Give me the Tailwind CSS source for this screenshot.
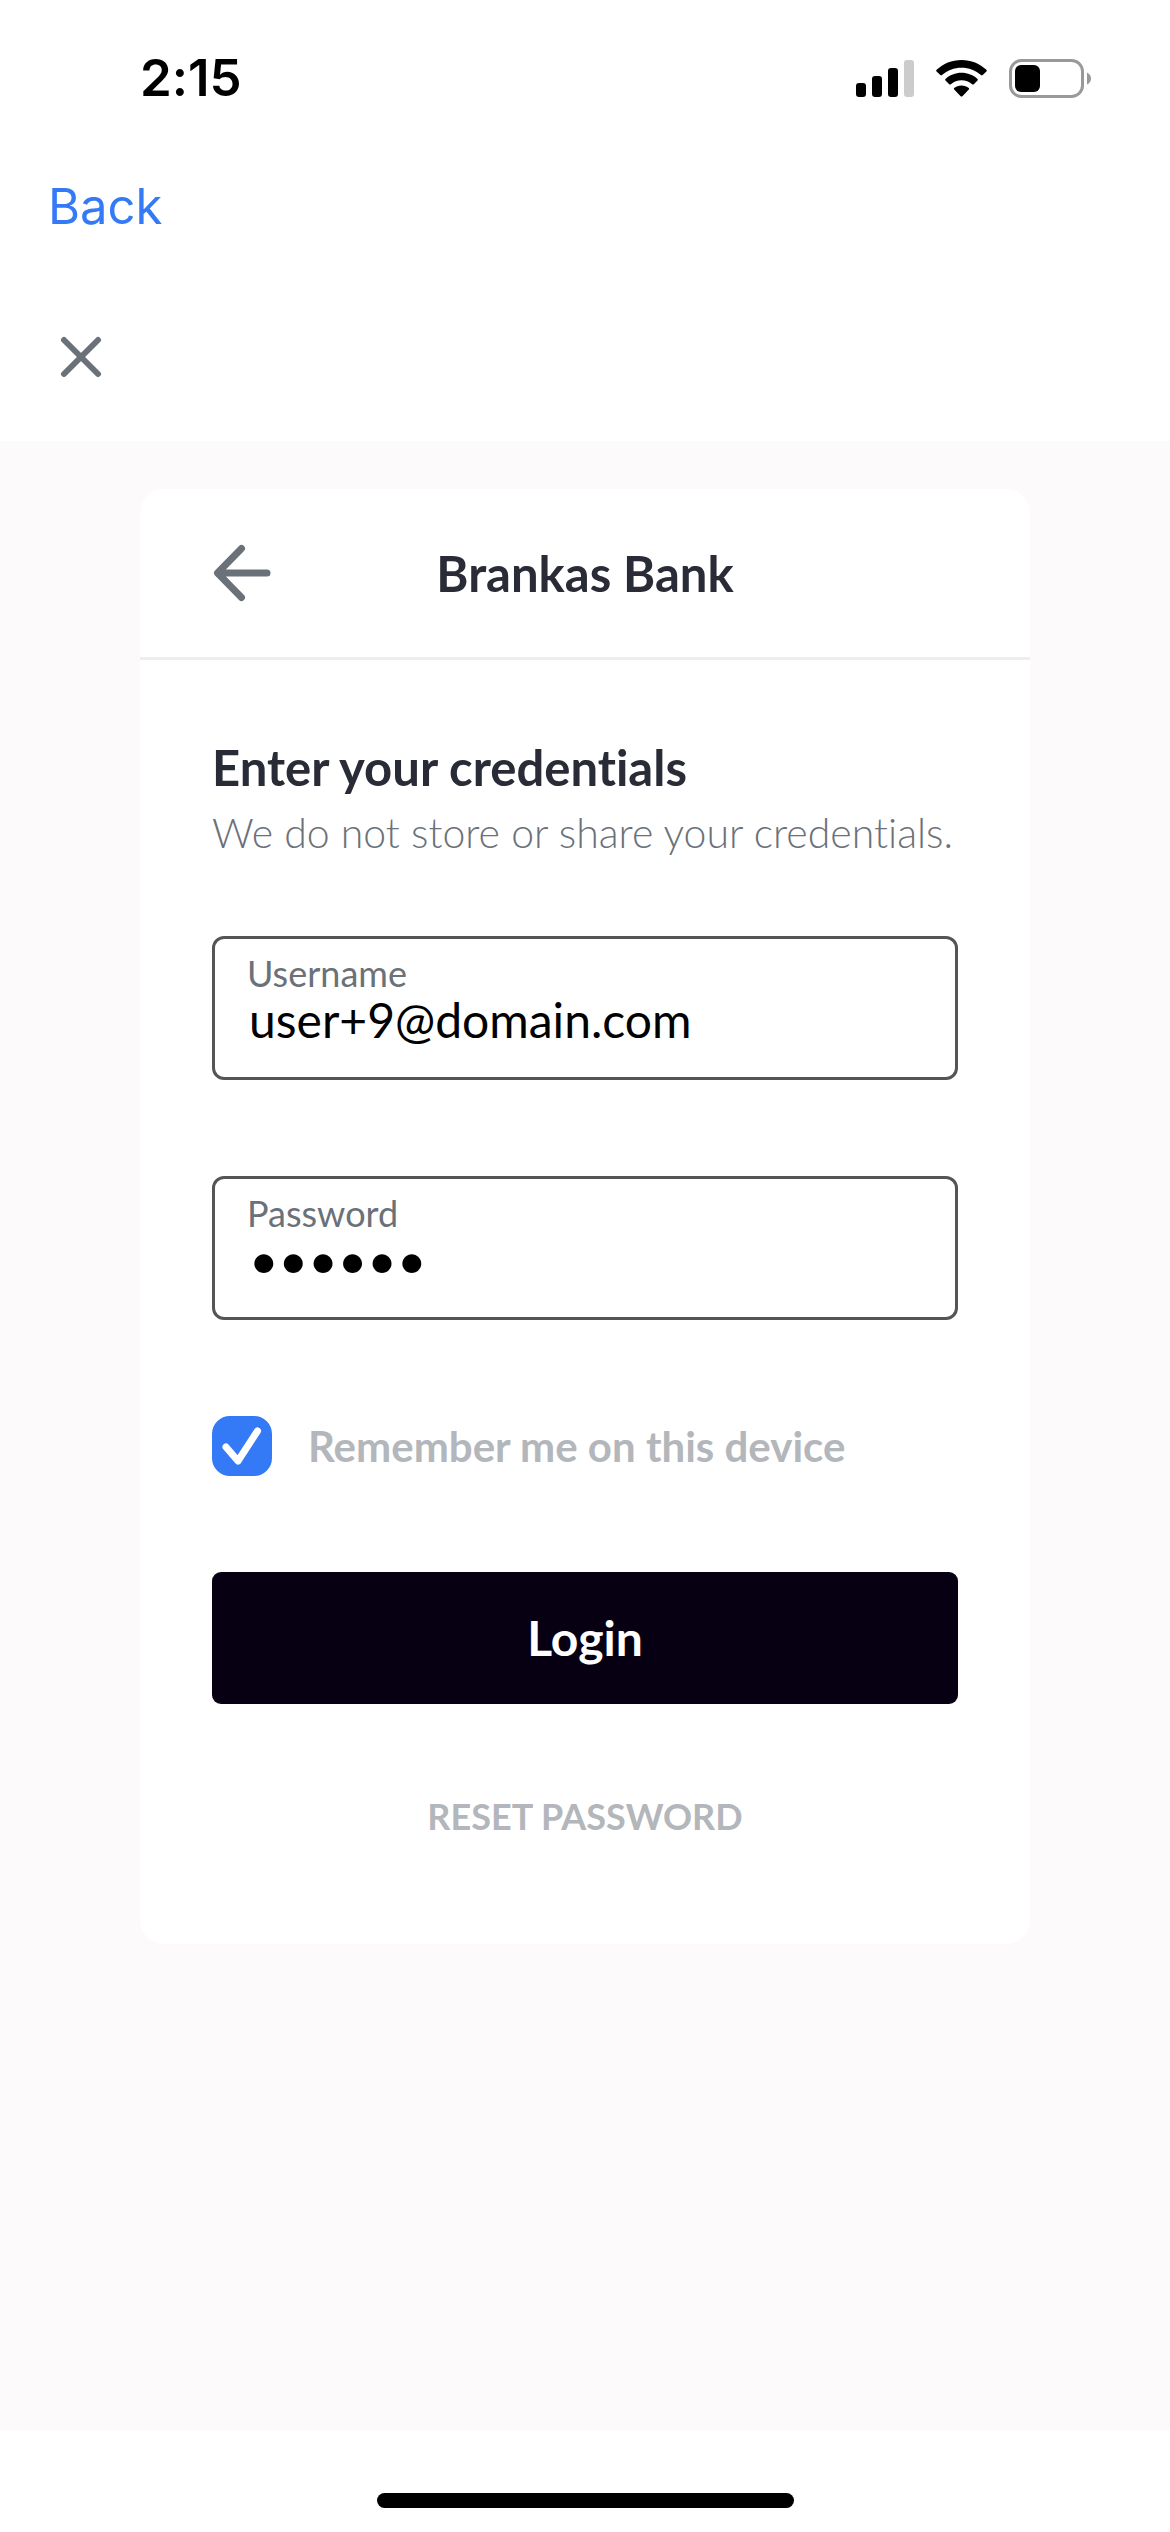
<!DOCTYPE html>
<html lang="en">
<head>
<meta charset="utf-8">
<meta name="viewport" content="width=device-width, initial-scale=1">
<title>Brankas Bank</title>
<script src="https://cdn.jsdelivr.net/npm/@tailwindcss/browser@4"></script>
</head>
<body class="flex min-h-screen flex-col bg-white font-['Lato',sans-serif] [font-variant-ligatures:none]">
  <!-- Status bar -->
  <div class="flex h-[141px] items-center justify-between pt-[15px] pr-[78px] pl-[140px]">
    <span class="font-['Inter',sans-serif] text-[51px] leading-[60px] font-semibold text-black">2:15</span>
    <div class="flex items-center gap-[22px]">
      <svg class="h-[37px] w-[58px]" viewBox="0 0 58 37" aria-hidden="true">
        <rect x="0" y="23" width="10" height="14" rx="3"/>
        <rect x="16" y="16" width="10" height="21" rx="3"/>
        <rect x="32" y="8" width="10" height="29" rx="3"/>
        <rect x="48" y="0" width="10" height="37" rx="3" fill="#ccc"/>
      </svg>
      <svg class="h-[37px] w-[51px]" viewBox="0 0 51 37" aria-hidden="true">
        <path d="M25.5 0C35 0 44 3.700 50.400 9.800Q51.200 10.700 50.400 11.500L46.700 15.100Q45.800 15.900 45 15.100C39.700 10.300 33 7.700 25.500 7.700S11.300 10.300 6 15.100Q5.200 15.900 4.300 15.100L.6 11.500Q-.2 10.700.6 9.800C7 3.700 16 0 25.500 0Z"/>
        <path d="M25.500 12.700C31.700 12.700 37.300 15 41.500 18.900Q42.300 19.700 41.500 20.500L37.800 24.200Q37 25 36.100 24.200C33.200 21.700 29.500 20.200 25.500 20.200S17.800 21.700 14.900 24.200Q14 25 13.200 24.200L9.500 20.500Q8.700 19.700 9.500 18.900C13.700 15 19.300 12.700 25.500 12.700Z"/>
        <path d="M25.500 25.500C28.300 25.500 30.800 26.400 32.800 28Q33.600 28.800 32.800 29.600L26.400 36.200Q25.500 37 24.600 36.200L18.200 29.600Q17.400 28.800 18.200 28C20.200 26.400 22.700 25.500 25.500 25.500Z"/>
      </svg>
      <svg class="h-[39px] w-[83px]" viewBox="0 0 83 39" aria-hidden="true">
        <rect x="1.500" y="1.500" width="72" height="36" rx="11" fill="none" stroke="#999" stroke-width="3"/>
        <rect x="6" y="6" width="25" height="27" rx="6"/>
        <path d="M78 13.500Q82 15.500 82 19.500T78 25.500Z" fill="#999"/>
      </svg>
    </div>
  </div>

  <nav class="flex h-[132px] items-center px-12">
    <a href="#" class="font-['Inter',sans-serif] text-[49px] leading-[60px] text-[#347af6]">Back</a>
  </nav>

  <div class="flex h-[168px] items-center px-[60px]">
    <button type="button" aria-label="Close">
      <svg class="size-[42px]" viewBox="0 0 42 42" fill="none" stroke="#6b7178" stroke-width="6" stroke-linecap="round" aria-hidden="true">
        <path d="M4 4 38 38M38 4 4 38"/>
      </svg>
    </button>
  </div>

  <main class="flex-1 bg-[#fcfafb] px-12 py-12">
    <section class="mx-auto w-full max-w-[890px] rounded-3xl bg-white">
      <header class="grid h-[171px] grid-cols-[60px_1fr_60px] items-center border-b-3 border-[#eee] px-[72px]">
        <button type="button" aria-label="Go back">
          <svg class="size-[60px]" viewBox="0 0 60 60" fill="none" stroke="#6b7178" stroke-width="7" stroke-linecap="round" stroke-linejoin="round" aria-hidden="true">
            <path d="M55 30H6M29.500 5.500 5.500 30 29.500 54.500"/>
          </svg>
        </button>
        <h1 class="text-center text-[49px] leading-[66px] font-bold text-[#292c36]">Brankas Bank</h1>
      </header>

      <form class="flex flex-col gap-24 px-[72px] pt-[74px] pb-28">
        <div class="-mb-[26px]">
          <h2 class="text-[49px] leading-[66px] font-bold text-[#292c36]">Enter your credentials</h2>
          <p class="text-[41px] leading-[66px] font-light text-[#6b7178]">We do not store or share your credentials.</p>
        </div>

        <div class="flex flex-col rounded-xl border-3 border-[#555] px-8 pt-[14px] pb-[30px]">
          <label for="username" class="text-[36px] leading-10 text-[#6b7178]">Username</label>
          <input id="username" type="text" value="user+9@domain.com" class="h-[54px] w-full pl-[2px] text-[48px] leading-[54px] text-black outline-none">
        </div>

        <div class="flex flex-col rounded-xl border-3 border-[#555] px-8 pt-[14px] pb-[30px]">
          <label for="password" class="text-[36px] leading-10 text-[#6b7178]">Password</label>
          <input id="password" type="password" value="secret" class="h-[54px] w-full pl-[2px] text-[51px] leading-[54px] text-black outline-none">
        </div>

        <div class="flex h-[60px] items-center gap-9">
          <span class="relative size-[60px] shrink-0">
            <input id="remember" type="checkbox" checked class="peer block size-[60px] appearance-none rounded-[18px] border-3 border-[#999] checked:border-[#347af6] checked:bg-[#347af6]">
            <svg class="pointer-events-none absolute inset-0 hidden size-[60px] peer-checked:block" viewBox="0 0 60 60" fill="none" stroke="#fff" stroke-width="7" stroke-linecap="round" stroke-linejoin="round" aria-hidden="true">
              <path d="M14 31 26 45 45.500 15"/>
            </svg>
          </span>
          <label for="remember" class="text-[42px] leading-[60px] font-bold text-[#b3b6bb]">Remember me on this device</label>
        </div>

        <button type="submit" class="h-[132px] w-full rounded-[9px] bg-[#070013] text-[48px] leading-[66px] font-bold text-white">Login</button>

        <a href="#" class="self-center text-[36px] leading-8 font-bold text-[#b3b6bb]">RESET PASSWORD</a>
      </form>
    </section>
  </main>

  <!-- Home indicator -->
  <div class="flex h-[102px] items-end justify-center pb-6">
    <div class="h-[15px] w-[417px] rounded-full bg-black"></div>
  </div>
</body>
</html>
